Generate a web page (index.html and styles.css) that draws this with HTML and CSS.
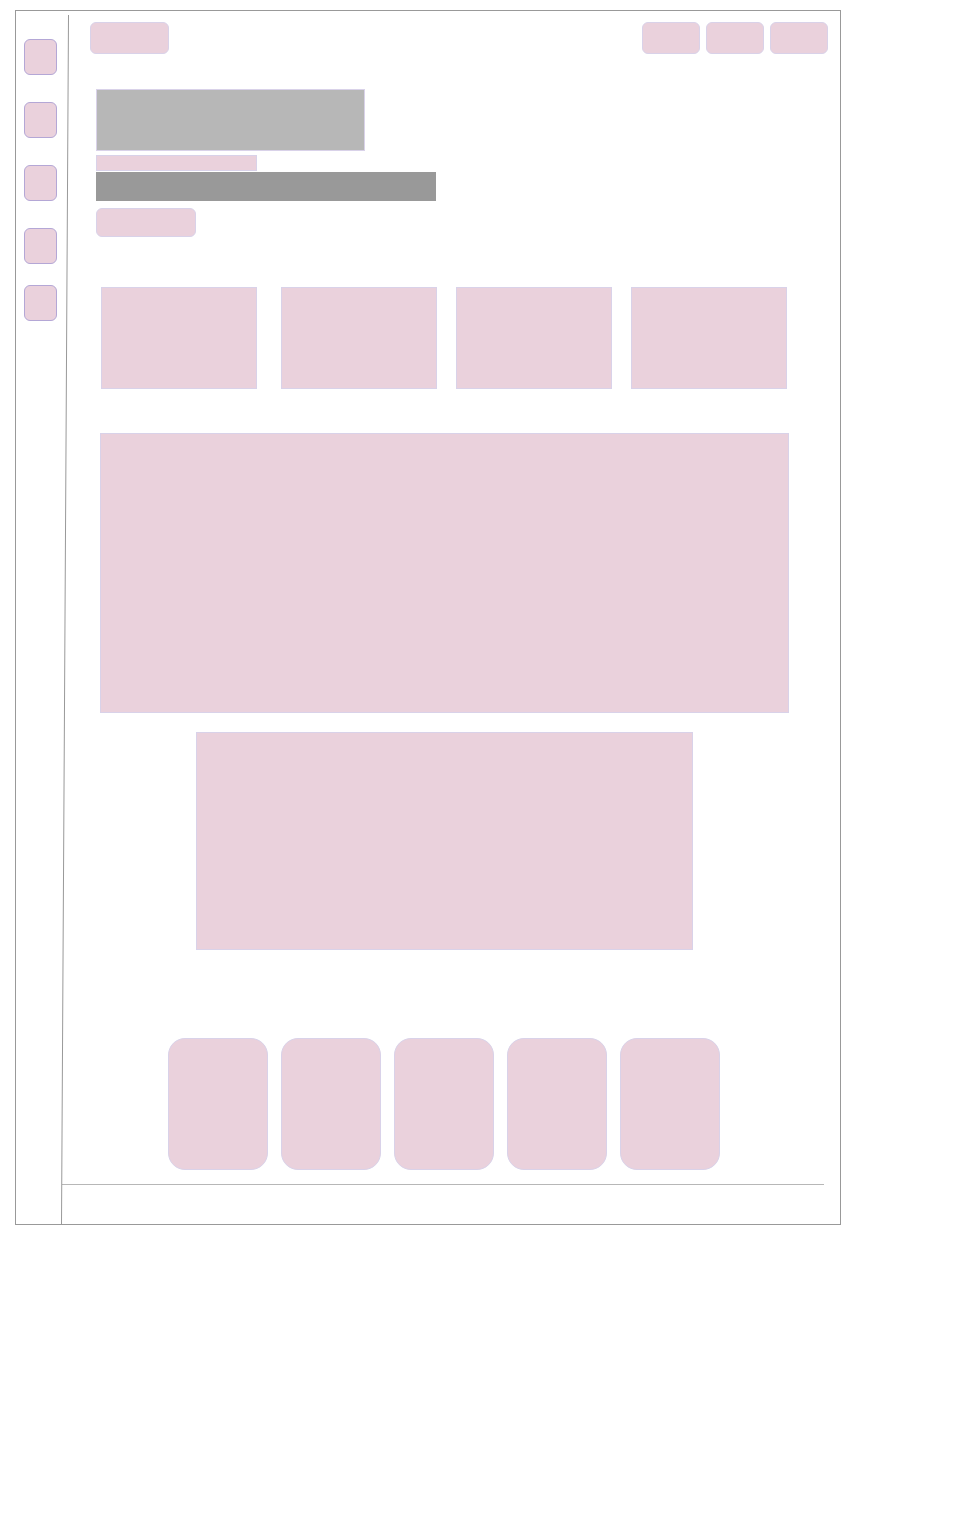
FILE: index.html
```html
<!DOCTYPE html>
<html lang="en">
<head>
<meta charset="utf-8">
<meta name="viewport" content="width=device-width, initial-scale=1">
<title>Wireframe</title>
<link rel="stylesheet" href="styles.css">
</head>
<body>
<div class="frame">
  <nav class="sidebar" aria-label="Main">
    <button class="block side-button" type="button" aria-label="Item 1"></button>
    <button class="block side-button" type="button" aria-label="Item 2"></button>
    <button class="block side-button" type="button" aria-label="Item 3"></button>
    <button class="block side-button" type="button" aria-label="Item 4"></button>
    <button class="block side-button side-button-last" type="button" aria-label="Item 5"></button>
    <svg class="divider" viewBox="0 0 8 1209" preserveAspectRatio="none" aria-hidden="true">
      <line x1="7.5" y1="0" x2="0.5" y2="1209" stroke="#999999" stroke-width="1"/>
    </svg>
  </nav>
  <div class="content">
    <header class="topbar">
      <button class="block pill brand" type="button" aria-label="Home"></button>
      <div class="actions">
        <button class="block pill action" type="button" aria-label="Action 1"></button>
        <button class="block pill action" type="button" aria-label="Action 2"></button>
        <button class="block pill action" type="button" aria-label="Action 3"></button>
      </div>
    </header>
    <main>
      <section class="hero">
        <div class="block title"></div>
        <div class="block subtitle"></div>
        <div class="summary"></div>
        <button class="block pill cta" type="button" aria-label="Start"></button>
      </section>
      <section class="cards">
        <div class="block card"></div>
        <div class="block card"></div>
        <div class="block card"></div>
        <div class="block card"></div>
      </section>
      <section class="panels">
        <div class="block panel-large"></div>
        <div class="block panel-medium"></div>
      </section>
      <section class="tiles">
        <div class="block tile"></div>
        <div class="block tile"></div>
        <div class="block tile"></div>
        <div class="block tile"></div>
        <div class="block tile"></div>
      </section>
    </main>
    <footer class="footer"></footer>
  </div>
</div>
</body>
</html>
```

FILE: styles.css
```css
* {
  box-sizing: border-box;
}

body {
  margin: 0;
  background: #ffffff;
  font-family: "Liberation Sans", sans-serif;
}

.frame {
  display: flex;
  margin: 10px 118px 0 15px;
  border: 1px solid #999999;
}

.block {
  display: block;
  padding: 0;
  background: #ead1dc;
  border: 1px solid #d9d2e9;
}

.pill {
  border-radius: 6px;
}

/* Sidebar */
.sidebar {
  position: relative;
  display: flex;
  flex: none;
  flex-direction: column;
  gap: 27px;
  width: 46px;
  padding: 28px 0 0 8px;
}

.side-button {
  width: 33px;
  height: 36px;
  border-color: #b4a7d6;
  border-radius: 6px;
}

.side-button-last {
  margin-top: -6px;
}

/* Slanted rule lying over the edge between sidebar and content */
.divider {
  position: absolute;
  top: 4px;
  left: 45px;
  width: 8px;
  height: calc(100% - 4px);
}

/* Content */
.content {
  flex: 1;
  min-width: 0;
}

.topbar {
  display: flex;
  justify-content: space-between;
  padding: 11px 12px 0 28px;
}

.brand {
  width: 79px;
  height: 32px;
}

.actions {
  display: flex;
  gap: 6px;
}

.action {
  width: 58px;
  height: 32px;
}

.hero {
  padding: 35px 0 0 34px;
}

.title {
  width: 269px;
  height: 62px;
  margin-bottom: 4px;
  background: #b7b7b7;
}

.subtitle {
  width: 161px;
  height: 16px;
  margin-bottom: 1px;
}

.summary {
  width: 340px;
  height: 29px;
  margin-bottom: 7px;
  background: #999999;
}

.cta {
  width: 100px;
  height: 29px;
}

.cards {
  display: flex;
  gap: 19px;
  padding: 50px 53px 0 39px;
}

.card {
  flex: 1;
  height: 102px;
}

.card:first-child {
  margin-right: 5px;
}

.panels {
  display: flex;
  flex-direction: column;
  align-items: center;
  gap: 19px;
  padding: 44px 51px 0 38px;
}

.panel-large {
  width: 100%;
  height: 280px;
}

.panel-medium {
  width: 497px;
  max-width: 100%;
  height: 218px;
}

.tiles {
  display: flex;
  justify-content: center;
  gap: 13px;
  padding: 88px 52px 0 38px;
}

.tile {
  width: 100px;
  height: 132px;
  border-radius: 17px;
}

.footer {
  height: 40px;
  margin: 14px 16px 0 0;
  border-top: 1px solid #b7b7b7;
}
```
